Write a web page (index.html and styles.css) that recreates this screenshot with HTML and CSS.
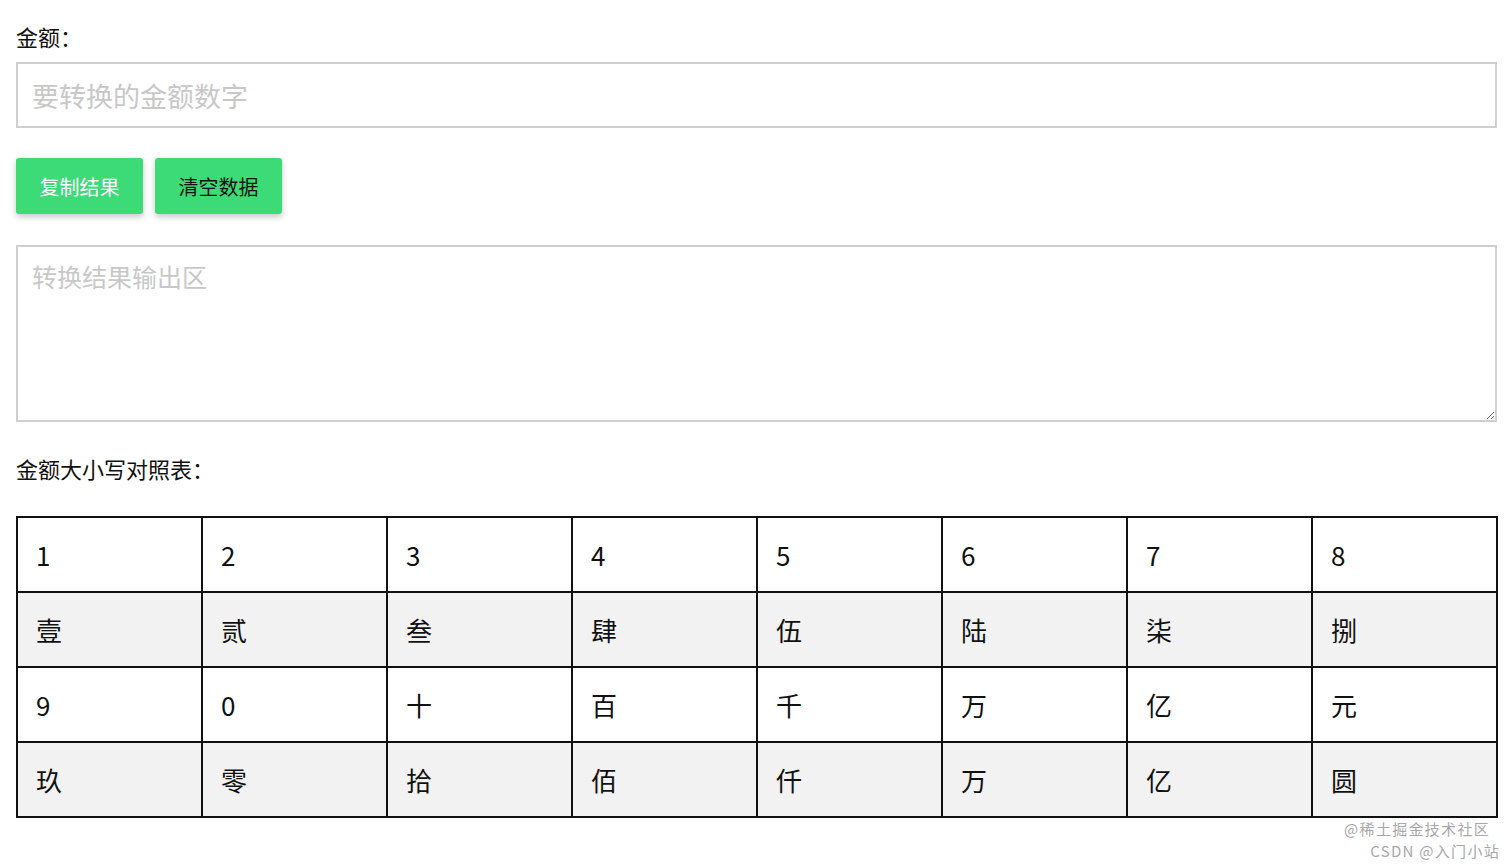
FILE: index.html
```html
<!DOCTYPE html>
<html lang="zh-CN">
<head>
<meta charset="utf-8">
<title>金额转换</title>
<link rel="stylesheet" href="styles.css">
</head>
<body>
<div class="page">
  <div class="label">金额：</div>
  <input class="amount" type="text" placeholder="要转换的金额数字">
  <div class="actions">
    <button class="btn btn-copy">复制结果</button>
    <button class="btn btn-clear">清空数据</button>
  </div>
  <textarea class="result" placeholder="转换结果输出区"></textarea>
  <div class="label table-label">金额大小写对照表：</div>
  <table class="map">
    <tr><td>1</td><td>2</td><td>3</td><td>4</td><td>5</td><td>6</td><td>7</td><td>8</td></tr>
    <tr class="alt"><td>壹</td><td>贰</td><td>叁</td><td>肆</td><td>伍</td><td>陆</td><td>柒</td><td>捌</td></tr>
    <tr><td>9</td><td>0</td><td>十</td><td>百</td><td>千</td><td>万</td><td>亿</td><td>元</td></tr>
    <tr class="alt"><td>玖</td><td>零</td><td>拾</td><td>佰</td><td>仟</td><td>万</td><td>亿</td><td>圆</td></tr>
  </table>
</div>
<div class="watermark">
  <div class="wm-line wm-first">@稀土掘金技术社区</div>
  <div class="wm-line">CSDN @入门小站</div>
</div>
</body>
</html>
```

FILE: styles.css
```css
html, body {
  margin: 0;
  padding: 0;
  background: #ffffff;
}
body {
  font-family: "Noto Sans CJK SC", "Liberation Sans", sans-serif;
  color: #111;
}
.page {
  padding: 20px 15px 0 16px;
  display: flex;
  flex-direction: column;
}
.label {
  font-size: 22px;
  line-height: 32px;
  height: 32px;
}
.amount {
  margin-top: 10px;
  height: 66px;
  box-sizing: border-box;
  border: 2px solid #cfcfcf;
  padding: 0 14px;
  font-size: 27px;
  font-family: "Noto Sans CJK SC", sans-serif;
  outline: none;
}
.amount::placeholder, .result::placeholder {
  color: #c8c8c8;
}
.actions {
  display: flex;
  gap: 12px;
  margin-top: 30px;
}
.btn {
  width: 127px;
  height: 56px;
  border: none;
  border-radius: 3px;
  background: #3ddb78;
  font-size: 20px;
  font-family: "Noto Sans CJK SC", sans-serif;
  box-shadow: 0 3px 6px rgba(0,0,0,0.22);
  padding: 0;
}
.btn-copy { color: #fff; }
.btn-clear { color: #111; }
.result {
  margin-top: 31px;
  height: 177px;
  box-sizing: border-box;
  border: 2px solid #cfcfcf;
  padding: 11px 14px;
  font-size: 25px;
  line-height: 36px;
  font-family: "Noto Sans CJK SC", sans-serif;
  outline: none;
}
.table-label {
  margin-top: 30px;
}
.map {
  margin-top: 32px;
  border-collapse: collapse;
  width: 1482px;
  table-layout: fixed;
  border: 2px solid #111;
}
.map td {
  border: 2px solid #111;
  height: 73px;
  padding: 0 18px;
  font-size: 26px;
  font-family: "Noto Sans CJK SC", "Liberation Sans", sans-serif;
  color: #111;
}
.map tr.alt td {
  background: #f2f2f2;
}
.watermark {
  position: absolute;
  right: 12px;
  top: 818px;
  text-align: right;
  font-size: 15px;
  letter-spacing: 1.3px;
  line-height: 22px;
  color: #a8a8a8;
  font-family: "Noto Sans CJK SC", sans-serif;
}
.wm-first {
  margin-right: 10px;
}
```
